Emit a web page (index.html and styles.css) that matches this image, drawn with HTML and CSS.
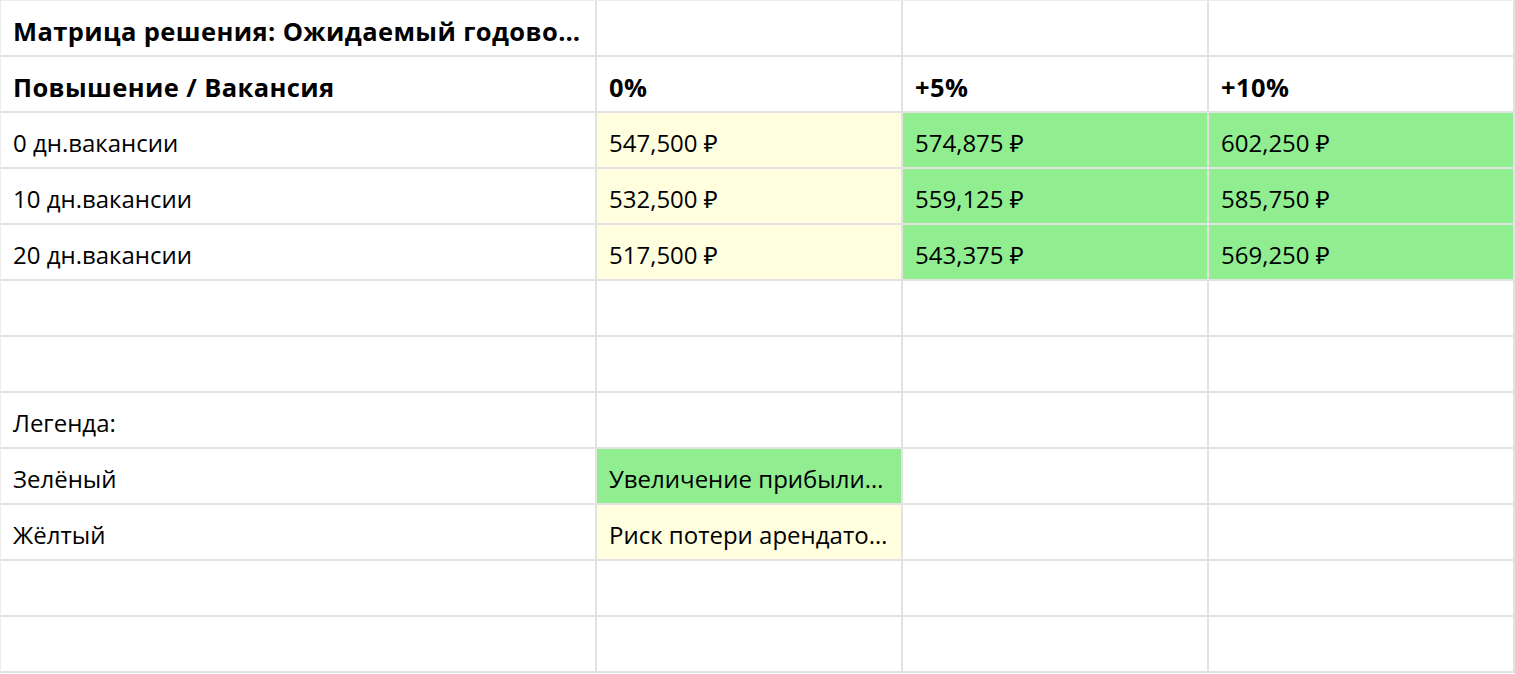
FILE: index.html
```html
<!DOCTYPE html>
<html lang="ru">
<head>
<meta charset="utf-8">
<title>Матрица решения</title>
<link rel="stylesheet" href="styles.css">
</head>
<body>
<div class="sheet">
  <div class="cell bold">Матрица решения: Ожидаемый годовой доход от аренды</div>
  <div class="cell"></div>
  <div class="cell"></div>
  <div class="cell"></div>

  <div class="cell bold">Повышение / Вакансия</div>
  <div class="cell bold">0%</div>
  <div class="cell bold">+5%</div>
  <div class="cell bold">+10%</div>

  <div class="cell">0 дн.вакансии</div>
  <div class="cell yellow">547,500 ₽</div>
  <div class="cell green">574,875 ₽</div>
  <div class="cell green">602,250 ₽</div>

  <div class="cell">10 дн.вакансии</div>
  <div class="cell yellow">532,500 ₽</div>
  <div class="cell green">559,125 ₽</div>
  <div class="cell green">585,750 ₽</div>

  <div class="cell">20 дн.вакансии</div>
  <div class="cell yellow">517,500 ₽</div>
  <div class="cell green">543,375 ₽</div>
  <div class="cell green">569,250 ₽</div>

  <div class="cell"></div><div class="cell"></div><div class="cell"></div><div class="cell"></div>
  <div class="cell"></div><div class="cell"></div><div class="cell"></div><div class="cell"></div>

  <div class="cell">Легенда:</div>
  <div class="cell"></div><div class="cell"></div><div class="cell"></div>

  <div class="cell">Зелёный</div>
  <div class="cell green">Увеличение прибыли при росте аренды</div>
  <div class="cell"></div><div class="cell"></div>

  <div class="cell">Жёлтый</div>
  <div class="cell yellow">Риск потери арендатора</div>
  <div class="cell"></div><div class="cell"></div>

  <div class="cell"></div><div class="cell"></div><div class="cell"></div><div class="cell"></div>
  <div class="cell"></div><div class="cell"></div><div class="cell"></div><div class="cell"></div>
</div>
</body>
</html>
```

FILE: styles.css
```css
html, body {
  margin: 0;
  padding: 0;
  background: #ffffff;
}
body {
  font-family: "Open Sans", "Noto Sans", sans-serif;
  color: #000000;
}
.sheet {
  display: grid;
  grid-template-columns: 596px 306px 306px 306px;
  grid-auto-rows: 56px;
  border-top: 1px solid #ececec;
  border-left: 1px solid #ececec;
  width: max-content;
}
.cell {
  box-sizing: border-box;
  border-right: 2px solid #e2e2e2;
  border-bottom: 2px solid #e2e2e2;
  padding: 6px 12px 0 12px;
  font-size: 24px;
  line-height: 48px;
  white-space: nowrap;
  overflow: hidden;
  text-overflow: ellipsis;
}
.bold {
  font-weight: 700;
  font-size: 25.5px;
  letter-spacing: 0.4px;
}
.green {
  background: #90ee90;
}
.yellow {
  background: #ffffe0;
}
```
